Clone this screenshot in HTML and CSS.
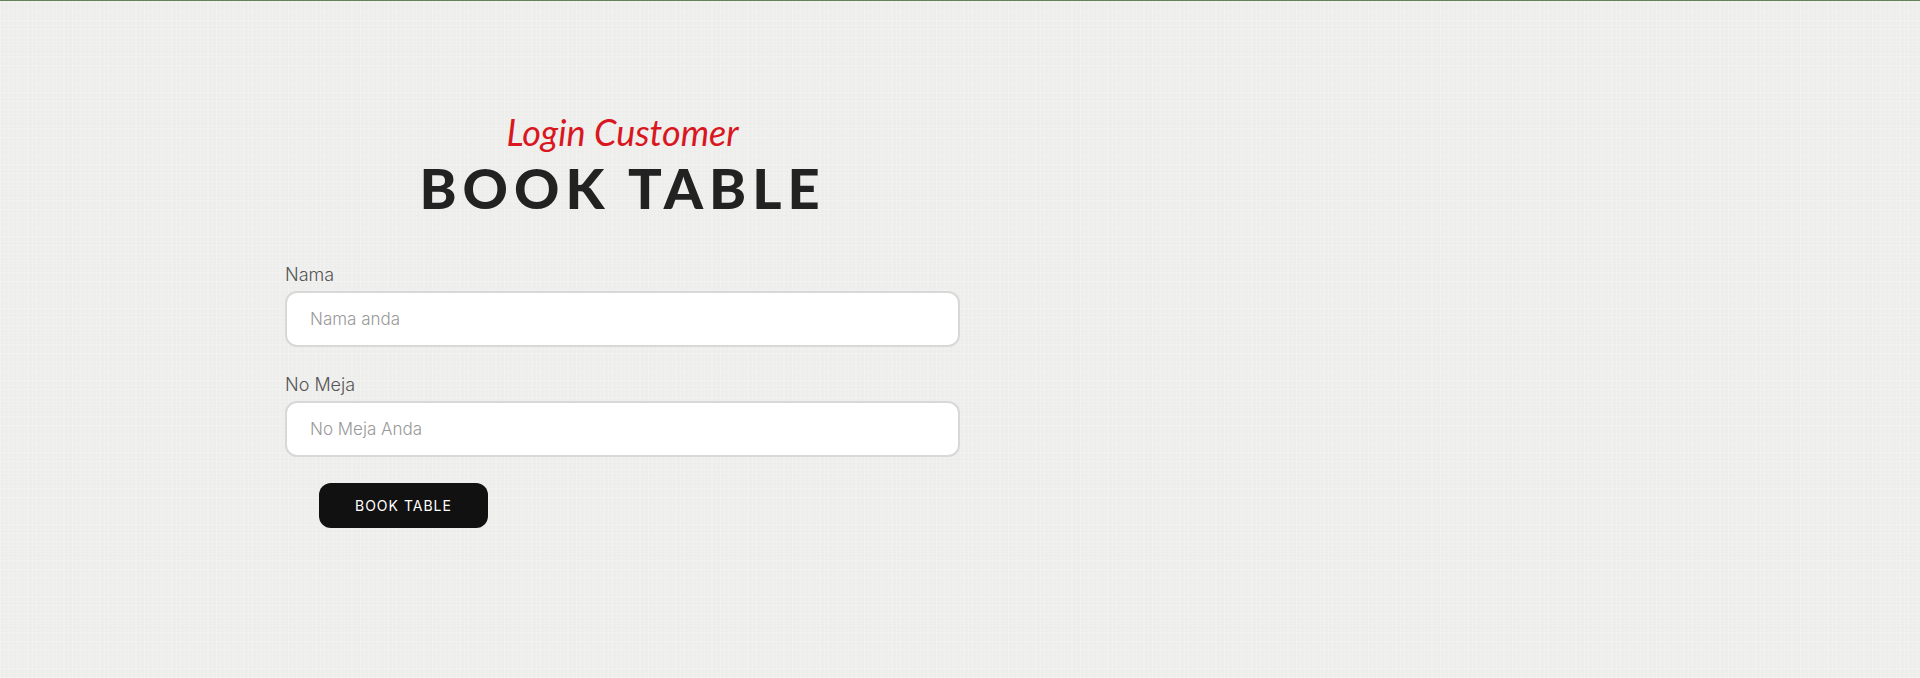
FILE: index.html
```html
<!DOCTYPE html>
<html lang="id">
<head>
<meta charset="utf-8">
<meta name="viewport" content="width=device-width, initial-scale=1">
<title>Book Table</title>
<link rel="stylesheet" href="styles.css">
</head>
<body>
<main class="reservation">
  <div class="container">
    <form class="booking">
      <header class="heading">
        <p class="subtitle">Login Customer</p>
        <h1 class="title">BOOK TABLE</h1>
      </header>
      <div class="field">
        <label class="label" for="nama">Nama</label>
        <input class="input" id="nama" name="nama" type="text" placeholder="Nama anda">
      </div>
      <div class="field">
        <label class="label" for="meja">No Meja</label>
        <input class="input" id="meja" name="meja" type="text" placeholder="No Meja Anda">
      </div>
      <div class="actions">
        <button class="button" type="submit">BOOK TABLE</button>
      </div>
    </form>
  </div>
</main>
</body>
</html>
```
FILE: styles.css
```css
* {
  box-sizing: border-box;
}

body {
  margin: 0;
  min-height: 100vh;
  border-top: 1px solid #63825a;
  background-color: #ededec;
  /* woven linen texture */
  background-image:
    repeating-linear-gradient(90deg, rgba(255, 255, 255, 0.14) 0 1px, transparent 1px 4px),
    repeating-linear-gradient(0deg, rgba(255, 255, 255, 0.14) 0 1px, transparent 1px 4px),
    repeating-linear-gradient(90deg, rgba(255, 255, 255, 0.12) 0 1px, transparent 1px 9px),
    repeating-linear-gradient(0deg, rgba(255, 255, 255, 0.12) 0 1px, transparent 1px 9px);
  color: #555;
  font-family: Inter, "Open Sans", sans-serif;
}

.reservation {
  padding: 107px 24px 149px;
}

.container {
  max-width: 1350px;
  margin: 0 auto;
}

.booking {
  width: 50%;
  min-width: 280px;
}

.heading {
  margin-bottom: 43px;
  text-align: center;
}

.subtitle {
  margin: 0;
  color: #d9171e;
  font-family: Lato, sans-serif;
  font-size: 36px;
  font-style: italic;
  line-height: 48px;
}

.title {
  margin: 0;
  color: #222;
  font-family: Lato, sans-serif;
  font-size: 56px;
  font-weight: 900;
  letter-spacing: 6px;
  line-height: 64px;
}

.field {
  margin-bottom: 26px;
}

.label {
  display: block;
  padding-bottom: 4px;
  font-size: 18px;
  font-weight: 300;
  line-height: 24px;
}

.input {
  display: block;
  width: 100%;
  height: 56px;
  padding: 0 23px;
  border: 2px solid #d8d8d8;
  border-radius: 12px;
  background: #fff;
  color: #555;
  font: inherit;
  font-size: 17px;
  font-weight: 300;
}

.input::placeholder {
  color: #999;
  opacity: 1;
}

.actions {
  padding-left: 34px;
}

.button {
  display: block;
  height: 45px;
  padding: 0 36px;
  border: 0;
  border-radius: 12px;
  background: #111;
  color: #fff;
  font: inherit;
  font-size: 14px;
  letter-spacing: 1px;
}
```
